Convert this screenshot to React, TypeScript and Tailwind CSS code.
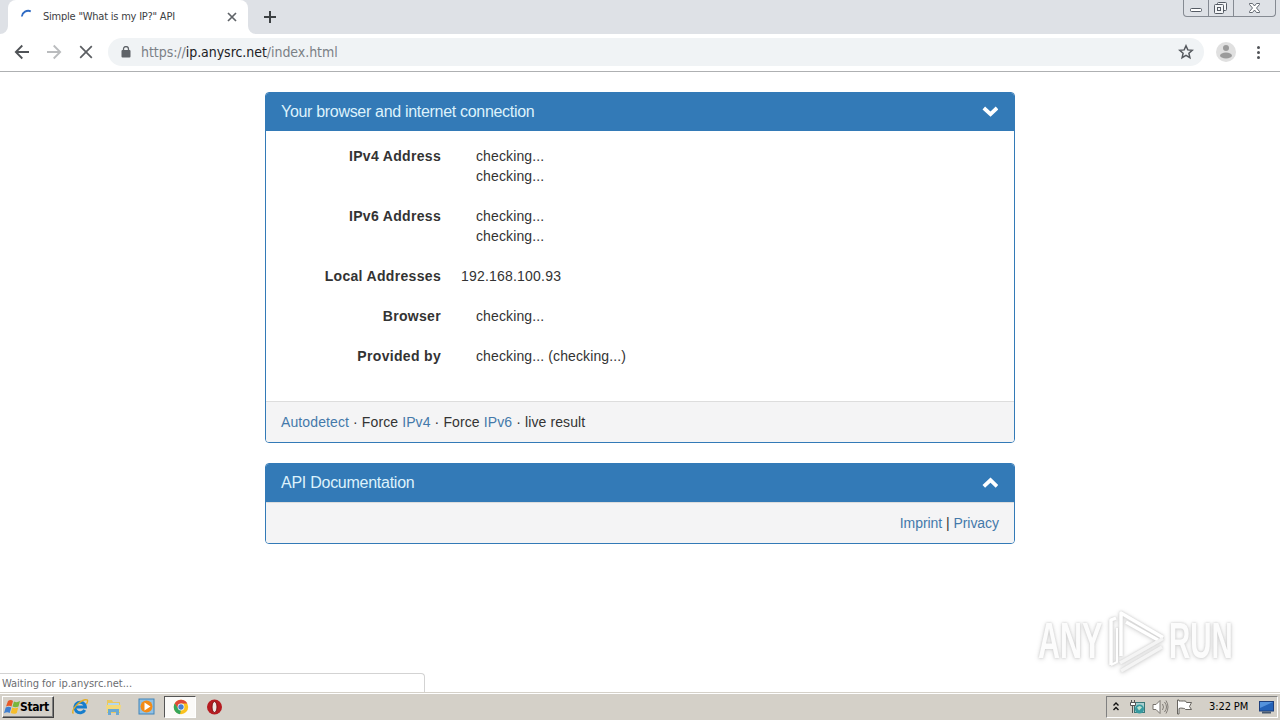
import React from "react";

function Tab() {
  return (
    <div className="flex h-[34px] bg-[#dee1e6] pl-2 font-['DejaVu_Sans_Condensed','DejaVu_Sans',sans-serif]">
      <div className="relative flex h-[34px] w-[240px] items-center rounded-t-lg bg-white pl-3">
        <svg className="absolute -left-2 bottom-0 h-2 w-2" viewBox="0 0 8 8" fill="#fff"><path d="M8 0v8H0a8 8 0 0 0 8-8z" /></svg>
        <svg className="absolute -right-2 bottom-0 h-2 w-2" viewBox="0 0 8 8" fill="#fff"><path d="M0 0v8h8a8 8 0 0 1-8-8z" /></svg>
        <svg className="h-4 w-4 shrink-0" viewBox="0 0 16 16" fill="none"><path d="M1.800 7.500A6.500 6.500 0 0 1 10.800 2.300" stroke="#2f6bc4" strokeWidth="1.800" /></svg>
        <span className="ml-[7px] w-[183px] whitespace-nowrap text-[11px] leading-[14px] tracking-[-0.22px] text-[#3c4043]">Simple "What is my IP?" API</span>
        <svg className="h-3 w-3 shrink-0" viewBox="0 0 12 12" stroke="#5f6368" strokeWidth="1.7"><path d="M2 2l8 8M10 2l-8 8" /></svg>
      </div>
      <svg className="ml-[15px] mt-[10px] h-[14px] w-[14px]" viewBox="0 0 14 14" stroke="#3c4043" strokeWidth="2"><path d="M7 1v12M1 7h12" /></svg>
      <div className="ml-auto mr-1 flex h-[17px] w-[93px] rounded-b-[4px] border border-t-0 border-[#858a92]">
        <svg className="h-4 w-[91px]" viewBox="0 0 91 16" fill="none" stroke="#555b64">
          <path d="M24.5 0v16M49.5 0v16" stroke="#858a92" />
          <rect x="6.500" y="8.500" width="11" height="3" rx="1" fill="#fff" />
          <rect x="33.500" y="2.500" width="9" height="8" rx="1" fill="#f4f5f7" />
          <rect x="30.500" y="4.500" width="9" height="9" rx="1" fill="#f4f5f7" />
          <rect x="33.500" y="7.500" width="3" height="3" />
          <path d="M65.500 3.500h3l2 2.500 2-2.500h3v1l-3 3.500 3 3.500v1h-3l-2-2.500-2 2.500h-3v-1l3-3.500-3-3.500z" fill="#fff" strokeWidth=".9" />
        </svg>
      </div>
    </div>
  );
}

function Toolbar() {
  return (
    <div className="flex h-[38px] items-center border-b border-[#aeb0b2] bg-white pb-px">
      <svg className="ml-[14px] h-4 w-4" viewBox="0 0 16 16" fill="none" stroke="#505357" strokeWidth="1.8"><path d="M15 8H2M8.300 1.500L1.800 8l6.500 6.500" /></svg>
      <svg className="ml-4 h-4 w-4" viewBox="0 0 16 16" fill="none" stroke="#babcbe" strokeWidth="1.800"><path d="M1 8h13M7.700 1.500L14.200 8l-6.500 6.500" /></svg>
      <svg className="ml-4 h-4 w-4" viewBox="0 0 16 16" stroke="#5b5e62" strokeWidth="1.700"><path d="M2.200 2.200l11.600 11.600M13.800 2.200L2.200 13.800" /></svg>
      <div className="ml-[14px] flex h-[28px] w-[1096px] items-center rounded-full bg-[#f0f3f5]">
        <svg className="ml-[13px] h-3 w-[10px]" viewBox="0 0 10 12"><rect x=".5" y="4" width="9" height="7.500" rx="1" fill="#5f6368" /><path d="M2.500 5V3a2.500 2.500 0 0 1 5 0v2" fill="none" stroke="#5f6368" strokeWidth="1.300" /></svg>
        <span className="ml-[10px] whitespace-nowrap font-['DejaVu_Sans_Condensed','DejaVu_Sans',sans-serif] text-[14px] leading-5 tracking-[-0.05px] text-[#7b8085]">https://<span className="text-[#202124]">ip.anysrc.net</span>/index.html</span>
        <svg className="ml-auto mr-[10px] h-4 w-4" viewBox="0 0 16 16" fill="none" stroke="#55595e" strokeWidth="1.500"><path d="M8 1.800l1.800 4.100 4.500.4-3.400 3 1 4.400L8 11.400l-3.900 2.300 1-4.400-3.400-3 4.500-.4z" /></svg>
      </div>
      <svg className="ml-3 h-5 w-5" viewBox="0 0 20 20"><circle cx="10" cy="10" r="10" fill="#e0e0e0" /><circle cx="10" cy="6" r="3" fill="#9b9b9b" /><ellipse cx="10" cy="13.500" rx="6" ry="3" fill="#9b9b9b" /></svg>
      <svg className="ml-5 h-4 w-[5px]" viewBox="0 0 5 16" fill="#505357"><circle cx="2.500" cy="3.500" r="1.500" /><circle cx="2.500" cy="8.500" r="1.500" /><circle cx="2.500" cy="13.500" r="1.500" /></svg>
    </div>
  );
}

function PanelHeader({ title, up = false }: { title: string; up?: boolean }) {
  return (
    <div className="flex h-[38px] items-center justify-between bg-[#337ab7] pl-[15px] pr-4 text-[16px] leading-[18px] text-[#ddf2fc]">
      <span className={up ? "tracking-[-0.26px]" : "tracking-[-0.31px]"}>{title}</span>
      <svg className="h-4 w-4" viewBox="0 0 16 16" fill="none" stroke="#fff" strokeWidth="3.800">{up ? <path d="M1.800 11.300L8.500 5.100l6.500 6.200" /> : <path d="M1.800 4L8.500 10.100l6.500-6.100" />}</svg>
    </div>
  );
}

const rows = [
  { label: "IPv4 Address", values: ["checking...", "checking..."], spinner: true },
  { label: "IPv6 Address", values: ["checking...", "checking..."], spinner: true },
  { label: "Local Addresses", values: ["192.168.100.93"], spinner: false },
  { label: "Browser", values: ["checking..."], spinner: true },
  { label: "Provided by", values: ["checking... (checking...)"], spinner: true },
];

function Content() {
  return (
    <main className="mx-auto flex w-[750px] flex-col gap-5 pt-5 text-[14px] leading-5 text-[#333]">
      <section className="h-[351px] overflow-hidden rounded border border-[#337ab7]">
        <PanelHeader title="Your browser and internet connection" />
        <div className="flex h-[270px] flex-col gap-5 pt-[15px]">
          {rows.map((r) => (
            <div key={r.label} className="flex">
              <div className="w-[175px] text-right font-bold tracking-[0.32px]">{r.label}</div>
              <div className={r.spinner ? "pl-[35px] tracking-[0.12px]" : "pl-5 tracking-[0.2px]"}>
                {r.values.map((v, i) => <div key={i}>{v}</div>)}
              </div>
            </div>
          ))}
        </div>
        <div className="h-[41px] whitespace-pre border-t border-[#ddd] bg-[#f4f4f5] pl-[15px] pt-[10px] tracking-[0.11px]">
          <a className="text-[#4479aa]">Autodetect</a> · Force <a className="text-[#4479aa]">IPv4</a> · Force <a className="text-[#4479aa]">IPv6</a> · live result
        </div>
      </section>
      <section className="h-[81px] overflow-hidden rounded border border-[#337ab7]">
        <PanelHeader title="API Documentation" up />
        <div className="h-[41px] border-t border-[#ddd] bg-[#f4f4f5] pr-[15px] pt-[10px] text-right tracking-[-0.05px]">
          <a className="text-[#4479aa]">Imprint</a> | <a className="text-[#4479aa]">Privacy</a>
        </div>
      </section>
    </main>
  );
}

function Watermark() {
  return (
    <div className="absolute left-[1038px] top-[535px] flex h-[68px] w-[200px] items-center font-['Liberation_Sans',sans-serif] text-[50px] font-bold leading-[60px] text-[#fcfcfc] [filter:drop-shadow(0_0_1px_#ccc)_drop-shadow(0_1px_2px_#ddd)]">
      <span className="w-[70px] shrink-0"><span className="inline-block origin-left scale-x-[0.61]">ANY</span></span>
      <svg className="h-[66px] w-[60px] shrink-0" viewBox="0 0 60 66" fill="none" stroke="#fff" strokeWidth="3.500" strokeLinejoin="round">
        <path d="M13 48V5l42 24.500" />
        <path d="M18 14l32 18" />
        <path d="M3 57V12l5-2" />
        <path d="M3 57l6-3V20" strokeWidth="2" />
        <path d="M12 55l43-24.500" stroke="#f4f4f4" />
        <path d="M13 63l41-24" stroke="#f4f4f4" />
      </svg>
      <span className="ml-[1px] w-[63px] shrink-0"><span className="inline-block origin-left scale-x-[0.59]">RUN</span></span>
    </div>
  );
}

function Taskbar() {
  return (
    <footer className="flex h-7 items-center border-t border-[#d5d1c9] bg-[#d4d0c8] shadow-[inset_0_1px_0_#fff] font-['DejaVu_Sans_Condensed','DejaVu_Sans',sans-serif] text-[11px] text-black">
      <div className="ml-[2px] mt-px flex h-[22px] w-[52px] items-center border border-b-[#404040] border-l-white border-r-[#404040] border-t-white pl-px shadow-[inset_-1px_-1px_0_#808080]">
        <svg className="h-4 w-4 shrink-0" viewBox="0 0 16 16"><path d="M4 2c2-1.500 4-1 5 0L7.500 7.500C6 6.500 4 6.500 2 7.500z" fill="#e85a28" /><path d="M10 2.500c2 1 4 .8 6-.4L14.500 7.500c-2 1-4 1-6 0z" fill="#79b63d" /><path d="M1.700 8.500c2-1 4-.8 5.600 0L5.700 14c-2-1-3.500-.8-5.700.2z" fill="#3f7fd0" /><path d="M8.200 8.500c2 1 4 .8 6 0L12.800 14c-2 1.200-4 1-6.100 0z" fill="#f6bd2a" /></svg>
        <span className="text-[12px] font-bold leading-4 tracking-[-0.4px]">Start</span>
      </div>
      <svg className="ml-[17px] h-[18px] w-[18px]" viewBox="0 0 18 18" fill="none"><path d="M13.800 12a5.300 5.300 0 1 1 .6-3H5" stroke="#167dcc" strokeWidth="3" /><path d="M2.500 15.500C-1 13 8 3 14 1.700c4-.3 2.500 2.300 1.500 4.300" stroke="#e4ae23" strokeWidth="1.400" /></svg>
      <svg className="ml-4 h-[18px] w-[17px]" viewBox="0 0 17 18"><path d="M2 2h5l1 2h7v11H2z" fill="#e9c760" /><path d="M3 5h11v3H3z" fill="#b2d7ef" /><path d="M1 7h15l-1 7H2z" fill="#f3d979" /><path d="M3 17v-6h11v6h-3v-3H6v3z" fill="#69a9d3" /></svg>
      <svg className="ml-4 h-[17px] w-[17px]" viewBox="0 0 17 17"><rect x="1" y="1" width="15" height="15" fill="#90c1e5" stroke="#4083b7" /><circle cx="8.500" cy="8.500" r="6" fill="#f38b17" /><path d="M6.500 4.500l6 4-6 4z" fill="#fff" /></svg>
      <div className="ml-[9px] mt-px flex h-[22px] w-8 items-center justify-center border border-b-white border-l-[#555] border-r-white border-t-[#555] bg-[#fbfaf8] pl-px">
        <svg className="h-4 w-4" viewBox="0 0 16 16"><circle cx="8" cy="8" r="7.200" fill="#fbc21e" /><path d="M1.700 4.500A7.200 7.200 0 0 1 14.300 4.500H8L5 10z" fill="#df4937" /><path d="M1.700 4.500L5.500 10 8 11l-1 4.200A7.200 7.200 0 0 1 1.700 4.500z" fill="#36a65a" /><circle cx="8" cy="8" r="3.400" fill="#fff" /><circle cx="8" cy="8" r="2.700" fill="#477fd1" /></svg>
      </div>
      <svg className="ml-[10px] h-4 w-4" viewBox="0 0 16 16"><circle cx="8.500" cy="8" r="7.500" fill="#b61b20" /><ellipse cx="8.500" cy="8" rx="2.500" ry="5.500" fill="#eee6e2" stroke="#7d1013" /></svg>
      <div className="ml-auto mr-[2px] mt-px flex h-[22px] w-[172px] items-center border border-b-white border-l-[#808080] border-r-white border-t-[#808080]">
        <svg className="ml-1 h-3 w-[10px]" viewBox="0 0 10 12" fill="none" stroke="#111" strokeWidth="1.400"><path d="M2.500 4.500L5 2l2.500 2.500M2.500 9L5 6.500 7.500 9" /></svg>
        <svg className="ml-2 h-4 w-[17px]" viewBox="0 0 17 16"><rect x="5.500" y="3.500" width="10" height="10" fill="#a9cfd0" stroke="#397878" /><circle cx="10.500" cy="10" r="4.500" fill="#379aa0" /><path d="M8 8.500q3-3 5 0l-3 3z" fill="#bcdfcb" /><path d="M2.500 1v3M5.500 1v3M1.500 3.500h5v3h-5zM3.500 7v7" fill="#fff" stroke="#555" /></svg>
        <svg className="ml-[6px] h-4 w-[17px]" viewBox="0 0 17 16" fill="none" stroke="#77736d"><path d="M1 5.500h3l4-4v13l-4-4H1z" fill="#fff" /><path d="M10.500 5q2 3 0 6M12.500 3q4 5 0 10M14 1.500q4 6.500 0 13" strokeWidth=".9" /></svg>
        <svg className="ml-[7px] h-4 w-[17px]" viewBox="0 0 17 16" fill="#fff" stroke="#67645f"><path d="M1.500 1v14h1.500V9.500c2-1 4 0 5.500 0l1 1h6l-2-3 2-4h-5l-1-1.500C6.500 2 5 2 3 2V1z" /></svg>
        <span className="ml-[16px] w-[50px] whitespace-nowrap text-[11px] leading-4 tracking-[-0.1px]">3:22 PM</span>
        <svg className="h-[14px] w-[15px] shrink-0" viewBox="0 0 15 14"><rect x=".5" y="1.500" width="14" height="9.500" fill="#2362b8" stroke="#1d3f7c" /><path d="M1 2h13L1 8z" fill="#5392dc" /><path d="M3 12.500h9" stroke="#46586f" strokeWidth="2" /></svg>
      </div>
    </footer>
  );
}

export default function App() {
  return (
    <div className="flex h-[720px] w-[1280px] flex-col overflow-hidden bg-white font-['Liberation_Sans',sans-serif]">
      <Tab />
      <Toolbar />
      <div className="relative h-[620px]">
        <Content />
        <Watermark />
        <div className="absolute bottom-0 left-0 h-[19px] w-[425px] rounded-tr-[4px] border-r border-t border-[#d3d3d3] bg-white pl-[2px] pt-px font-['DejaVu_Sans_Condensed','DejaVu_Sans',sans-serif] text-[11px] leading-[18px] tracking-[-0.02px] text-[#6c6d70]">Waiting for ip.anysrc.net...</div>
      </div>
      <Taskbar />
    </div>
  );
}
